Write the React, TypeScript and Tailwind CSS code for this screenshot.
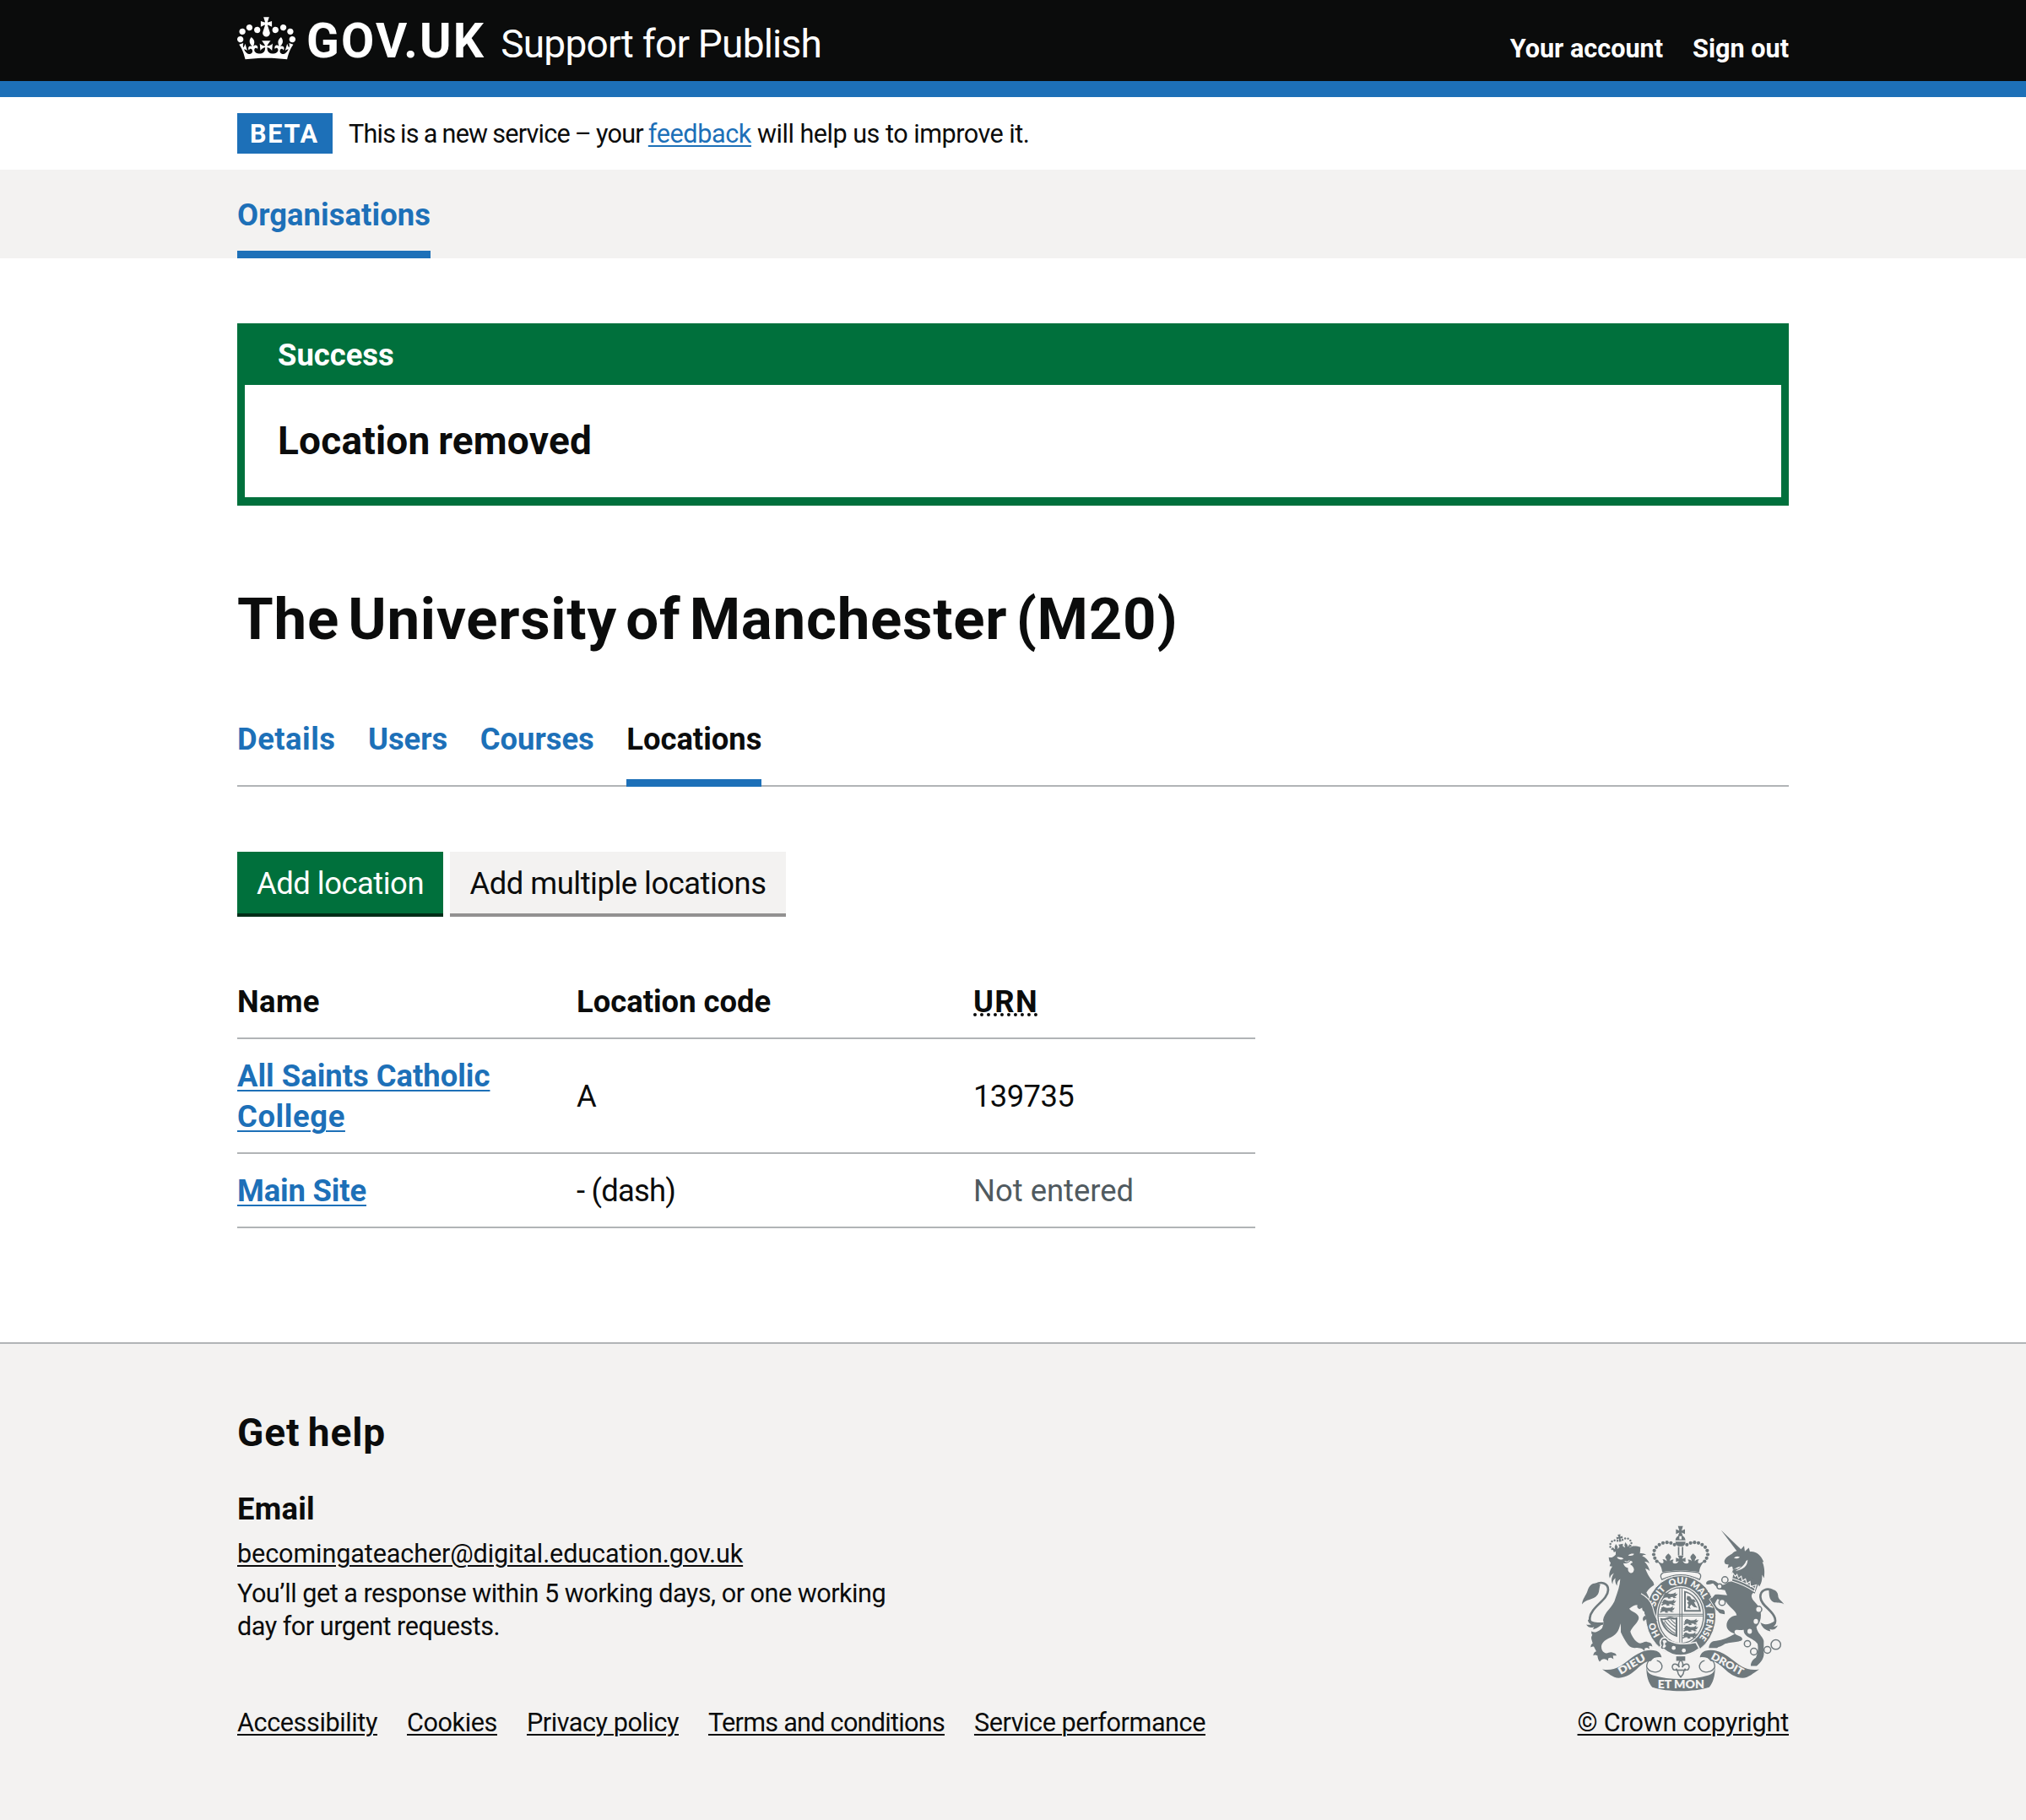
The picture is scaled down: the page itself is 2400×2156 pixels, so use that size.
import React from "react";

function Crown() {
  return (
    <svg viewBox="0 0 132 97" className="mt-[1px] h-[51px] w-[69px] self-start fill-white">
      <path d="M25 30.2c3.5 1.5 7.7-.2 9.1-3.7 1.5-3.6-.2-7.8-3.9-9.2-3.6-1.4-7.6.3-9.1 3.9-1.4 3.5.3 7.5 3.9 9zM9 39.5c3.6 1.5 7.8-.2 9.2-3.7 1.5-3.6-.2-7.8-3.9-9.1-3.6-1.5-7.6.2-9.1 3.8-1.4 3.5.3 7.5 3.8 9zM4.4 57.2c3.5 1.5 7.7-.2 9.1-3.8 1.5-3.6-.2-7.7-3.9-9.1-3.5-1.5-7.6.3-9.1 3.8-1.4 3.5.3 7.6 3.9 9.1zm38.3-21.4c3.5 1.5 7.7-.2 9.1-3.8 1.5-3.6-.2-7.7-3.9-9.1-3.6-1.5-7.6.3-9.1 3.8-1.3 3.6.4 7.7 3.9 9.1zm64.4-5.6c-3.6 1.5-7.8-.2-9.1-3.7-1.5-3.6.2-7.8 3.8-9.2 3.6-1.4 7.7.3 9.2 3.9 1.3 3.5-.4 7.5-3.9 9zm15.9 9.3c-3.6 1.5-7.7-.2-9.1-3.7-1.5-3.6.2-7.8 3.7-9.1 3.6-1.5 7.7.2 9.2 3.8 1.5 3.5-.3 7.5-3.8 9zm4.7 17.7c-3.6 1.5-7.8-.2-9.2-3.8-1.5-3.6.2-7.7 3.9-9.1 3.6-1.5 7.7.3 9.2 3.8 1.3 3.5-.4 7.6-3.9 9.1zM89.3 35.8c-3.6 1.5-7.8-.2-9.2-3.8-1.4-3.6.2-7.7 3.9-9.1 3.6-1.5 7.7.3 9.2 3.8 1.4 3.6-.3 7.7-3.9 9.1zM69.7 17.7l8.9 4.7V9.3l-8.9 2.8c-.2-.3-.5-.6-.9-.9L72.4 0H59.6l3.5 11.2c-.3.3-.6.5-.9.9l-8.8-2.8v13.1l8.8-4.7c.3.3.6.7.9.9l-5 15.4v.1c-.2.8-.4 1.6-.4 2.4 0 4.1 3.1 7.5 7 8.1h.2c.3 0 .7.1 1 .1.4 0 .7 0 1-.1h.2c4-.6 7.1-4.1 7.1-8.1 0-.8-.1-1.7-.4-2.4V34l-5.1-15.4c.4-.2.7-.6 1-.9zM66 92.8c16.9 0 32.8 1.1 47.1 3.2 4-16.9 8.9-26.7 14-33.5l-9.6-3.4c1 4.9 1.1 7.2 0 10.2-1.5-1.4-3-4.3-4.2-8.7L108.6 76c2.8-2 5-3.2 7.5-3.3-4.4 9.4-10 11.9-13.6 11.2-4.3-.8-6.3-4.6-5.6-7.9 1-4.7 5.7-5.9 8-.5 4.3-8.7-3-11.4-7.6-8.8 7.1-7.2 7.9-13.5 2.1-21.1-8 6.1-8.1 12.3-4.5 20.8-4.7-5.4-12.1-2.5-9.5 6.2 3.4-5.2 7.9-2 7.2 3.1-.6 4.3-6.4 7.8-13.5 7.2-10.3-.9-10.9-8-11.2-13.8 2.5-.5 7.1 1.8 11 7.3L80.2 60c-4.1 4.4-8 5.3-12.3 5.4 1.4-4.4 8-11.6 8-11.6H55.5s6.4 7.2 7.9 11.6c-4.2-.1-8-1-12.3-5.4l1.4 16.4c3.9-5.5 8.5-7.7 10.9-7.3-.3 5.8-.9 12.8-11.1 13.8-7.2.6-12.9-2.9-13.5-7.2-.7-5 3.8-8.3 7.1-3.1 2.7-8.7-4.6-11.6-9.4-6.2 3.7-8.5 3.6-14.7-4.6-20.8-5.8 7.6-5 13.9 2.2 21.1-4.7-2.6-11.9.1-7.7 8.8 2.3-5.5 7.1-4.2 8.1.5.7 3.3-1.3 7.1-5.7 7.9-3.5.7-9-1.8-13.5-11.2 2.5.1 4.7 1.3 7.5 3.3l-4.7-15.4c-1.2 4.4-2.7 7.2-4.3 8.7-1.1-3-.9-5.3 0-10.2l-9.5 3.4c5 6.9 9.9 16.7 14 33.5 14.8-2.1 30.8-3.2 47.7-3.2z" />
    </svg>
  );
}

const crownPearls: [number, number][] = [
  [401, 118], [388, 112], [374, 110], [360, 112], [347, 118], [336, 127], [329, 139], [327, 153], [331, 166], [338, 177],
];
const lionPearls: [number, number][] = [
  [-9, -33], [-19, -36], [-29, -34], [-36, -26], [-38, -16], [-33, -7],
];
const chainLinks: [number, number, number][] = [
  [580, 243, 11], [561, 266, 9], [570, 323, 11], [700, 348, 11], [660, 470, 11], [683, 498, 12], [731, 492, 12], [761, 473, 17],
];

function SmallLion({ x, y }: { x: number; y: number }) {
  return (
    <path
      transform={`translate(${x} ${y})`}
      d="M1 3l7-4 7 3 7 2 12-1 9-5-2 7 8-2-5 8-6 3 8 4-11 1-4-4-9 1 4 4-10 1-3-5-8 1-7 4-2-4 6-4-6-2 5-3z"
    />
  );
}

function RoyalArms() {
  return (
    <svg viewBox="72 50 720 590" className="h-[197px] w-[240px] fill-[#6f797d]" fontFamily="Lato, sans-serif" fontWeight="800">
      {/* Imperial crown */}
      <path d="M418 68l-5-16h18l-5 16 12-5v17l-12-5 5 13h-18l5-13-12 5V63z" />
      <path d="M404 103c1-11 7-16 14-17v13h8V86c7 1 13 6 14 17zM404 107h36c0 10-6 15-11 17h-14c-5-2-11-7-11-17z" />
      <path d="M413 126h5v30h-5zM427 126h5v30h-5z" />
      {crownPearls.map(([x, y]) => (
        <g key={`${x}-${y}`}>
          <circle cx={x} cy={y} r="6.3" />
          <circle cx={846 - x} cy={y} r="6.3" />
        </g>
      ))}
      <path d="M357 215c-1-17-9-28-18-39 9 3 13 8 19 8 6 0 4-10 0-13 8-2 12 2 15 6 1-8-4-9-5-14 2-7 7-10 11-14 4 4 9 8 10 14-1 5-5 7-5 14 4-5 8-7 14-5-5 5-5 13 4 13 8 0 12-5 14-9l-10 3v-15l12 5-5-12h20l-5 12 12-5v15l-10-3c2 4 6 9 14 9 9 0 9-8 4-13 6-2 10 0 14 5 0-7-4-9-5-14 1-6 6-10 10-14 4 4 9 7 11 14-1 5-6 6-5 14 3-4 7-8 15-6-4 3-6 13 0 13s10-5 19-8c-9 11-17 22-18 39-40-7-93-7-132 0z" />
      <path d="M362 217c40-7 82-7 122 0 10 4 14 12 6 25-45-22-90-22-134 0-8-12-4-21 6-25z" fill="#f3f2f1" stroke="#6f797d" strokeWidth="4" />

      {/* Crowned lion */}
      <g transform="translate(213 135) rotate(-10)">
        {lionPearls.map(([x, y]) => (
          <g key={`${x}-${y}`}>
            <circle cx={x} cy={y} r="3.7" />
            <circle cx={-x} cy={y} r="3.7" />
          </g>
        ))}
        <path d="M-3-45l-2-9H5l-2 9 8-2v9l-8-2 1 12h-8l1-12-8 2v-9z" />
        <path d="M-29 5l-3-20 9 10 0-8 6-10 5 11-2 8 8-6-2-9h16l-2 9 8 6-2-8 5-11 6 10 0 8 9-10-3 20C15 1-15 1-29 5z" />
      </g>
      <path d="M192 142c14-10 30-15 50-12 6-8 16-8 27-6l11 3-2 22c10-1 17 2 23 6-8-1-12 0-15 3 13 5 20 13 26 27-7-5-12-7-17-6 9 10 15 18 18 33-7-7-11-9-16-9 6 15 14 31 27 46 2 3 4 8 4 13-11 6-20 15-27 26 10 20 24 38 26 64 2 14 7 23 11 34-7-1-10 3-11 9-6-2-9-7-10-13-5 5-7 9-6 15-8-3-10-9-8-17-6 0-9 3-11 8-7-8-1-16 6-19-3-5-5-9-4-13-6-1-9-8-8-14l-10 5c-7-3-9-9-7-15-11 0-20 5-29 14 7 11 33 15 34 32 0 16-26 34-30 49 4 15 17 36 31 41 12 3 18-9 30-4 10 2 17 5 17 17-4-4-8-4-12-2l2 10c-6-6-12-6-17-2l-1 9c-5-8-12-11-22-11-11-1-23 4-36-11-11-14-19-31-26-45 0-14 1-20-2-31-3 27-17 43-41 53-15 8-25 16-26 29 0 10 3 17 11 22 9 6 17-4 27-1 7 2 13 2 16 11l-13 0 2 13c-7-7-14-7-19-2l0 8c-12-11-22-8-30 3-5-5-7-14-8-22-7-2-9-3-15 0 1-9 5-14 11-15l-9-17c-5 0-7 0-11 3 0-8 3-12 7-14-4-17-8-20-1-30-4-5-4-9-3-14 6 4 10 5 15 4 10-4 16-6 23-15 2-10 8-16 3-28 4-30 37-47 44-78 8-22 16-45 17-68-8 5-12 14-11 24-7-8-8-18-6-27-7 5-10 11-10 21-7-10-4-27 5-39-9 4-13 10-15 19-6-16 2-32 9-42l-10-2 4-12c-5-3-6-10-7-19 10 2 15 1 25-10z" />
      <path d="M196 163c7-2 17 0 24 5-7 5-19 4-24-5zM236 156c8-6 15-7 21-5-2 6-12 9-21 5zM219 184c8 2 16 0 24-7 3-3 8 0 9 5-6 1-8 4-8 7 8 4 12 10 13 18-2 9-6 12-11 12-7-1-12-9-10-18-6-1-14-5-17-17z" fill="#f3f2f1" />
      <path d="M224 177c6 3 11 2 17-3" fill="none" stroke="#f3f2f1" strokeWidth="3" />
      <path d="M148 398c-28 8-51 6-48-20 4-40 64-62 65-99 1-24-25-32-44-19" fill="none" stroke="#6f797d" strokeWidth="8" />
      <path d="M137 260c-20-12-38-2-45 21-6 19-18 28-20 49 13-19 40-14 54-32 9-12 6-24 11-38zM98 382c8 11 21 14 54 12-14 9-21 22-41 25l4-9c-11 5-20 3-28-8 7 2 13 1 18-1-8-4-11-8-12-15z" />

      {/* Garter and shield */}
      <ellipse cx="423" cy="370" rx="125" ry="142" stroke="#f3f2f1" strokeWidth="3" />
      <ellipse cx="423" cy="370" rx="87" ry="105" fill="#f3f2f1" />
      <ellipse cx="423" cy="370" rx="81" ry="99" fill="none" stroke="#6f797d" strokeWidth="4" />
      <path d="M418 272h3v194h-3zM426 272h3v194h-3zM343 364h160v3H343zM343 370h160v3H343z" />
      <SmallLion x={363} y={289} />
      <SmallLion x={358} y={314} />
      <SmallLion x={353} y={339} />
      <SmallLion x={437} y={383} />
      <SmallLion x={436} y={407} />
      <SmallLion x={433} y={431} />
      <path d="M350 379c18 5 24-5 36-5 9 1 15 5 25 2v70c-32-8-57-36-61-67zm8 7c8 26 25 44 46 51l1-53c-7 1-13-2-19-3-8 1-16 7-28 5z" fillRule="evenodd" />
      <path d="M366 387c8 12 18 22 38 36M376 384c8 10 16 18 28 26M386 381c6 8 10 12 18 18M362 392c8 18 24 32 42 42" fill="none" stroke="#6f797d" strokeWidth="3.5" />
      <path d="M435 282c30 5 55 33 60 74h-60zm6 7v61h47c-5-33-22-54-47-61z" fillRule="evenodd" />
      <path d="M446 300l10 2 6 10 9 1 6 9-7 0 6 12 7 8-13-2-10-9-5 8 4 7-12-3 4-11-5-9 6-3-8-8z" />
      <path id="garter-path" d="M423 483C374 483 329 432 329 370S374 257 423 257 517 308 517 370 472 483 423 483" fill="none" />
      <g fill="#f3f2f1" fontSize="32" textAnchor="middle">
        <text><textPath href="#garter-path" startOffset="17.5%">HO</textPath></text>
        <text><textPath href="#garter-path" startOffset="35.5%">SOIT</textPath></text>
        <text><textPath href="#garter-path" startOffset="48.5%">QUI</textPath></text>
        <text><textPath href="#garter-path" startOffset="60.5%">MAL</textPath></text>
        <text><textPath href="#garter-path" startOffset="70%">Y</textPath></text>
        <text><textPath href="#garter-path" startOffset="81%" textLength="96" lengthAdjust="spacingAndGlyphs">PENSE</textPath></text>
      </g>
      <path d="M356 452c8-6 19-3 23 6 30 14 62 16 98 7l12 22c-22 17-40 24-66 25-24 0-44-8-60-22-12 3-16-8-10-14-5-8-4-16 3-24z" stroke="#f3f2f1" strokeWidth="5" />
      <path d="M358 460c8-6 14-2 16 5-8 0-9 8-3 12-3 9-11 10-13 5 5-7 5-14 0-22z" fill="#f3f2f1" />
      <circle cx="398" cy="485" r="7" fill="#f3f2f1" />
      <circle cx="434" cy="494" r="7" fill="#f3f2f1" />
      {/* Lion's forepaw resting on the garter */}
      <path d="M276 288c24 8 44 34 46 54 3 18 10 32 18 46-9-1-13 3-12 11-6-3-9-8-10-15-6 4-8 9-6 16-9-3-11-10-9-17-6 0-9 3-11 8-7-8-1-16 6-19z" />
      <path d="M282 292c18 10 34 24 41 47 3 18 9 32 17 47" fill="none" stroke="#f3f2f1" strokeWidth="3.5" />

      {/* Unicorn */}
      <path d="M566 66l71 68 11-12 3 20 14-13 4 14c24-2 39 13 49 37l-5-1c8 19 9 35 6 58l-7-12c1 20-3 32-10 42l-7-14-90-33c2-15 8-17 21-16l12-9c-15 2-24 10-30 12 0-5 0-9-4-12l-14 6 3-13c-10 1-15-2-15-12 4-12 15-18 27-25 5-7 9-9 17-11z" />
      <path d="M612 166c5-6 12-8 21-4-4 5-12 7-21 4zM661 172c-1 22-14 34-44 40 20-12 32-20 38-36z" fill="#f3f2f1" />
      <path d="M612 216l-12 36 86 40 18-48z" />
      <path d="M602 250c28 6 55 21 82 36-9 7-11 13-8 21 4 14 24 23 30 45 4 18 3 40-14 58 2 22 22 32 26 50v38c3 18-6 36-25 51h-21c0-13 7-23 18-29 6-16 10-30 6-50-16-21-51-23-49-49-17 2-33-6-33 8 2 14 28 12 28 25-2 13-50 9-66 19-9 7-17 6-24 12H523c1-15 10-25 26-25 22-2 44-13 66-25-12-5-29-12-29-30 0-18 14-34 36-36-3-17-23-25-38-48-12 0-20-8-31-10l-9 17c6 14 14 20 24 21 9-1 13 7 11 16-12-2-20-3-24-12-14-6-24-20-30-34l19-23c16-3 29 1 44 2l-8-18-22-4-20-20c-7 0-16 8-25 1 1-11 12-13 22-12 14-1 22 18 37 16 12 0 17-12 25-11z" />
      <path d="M600 246c31 9 60 22 87 40M604 237c31 9 58 21 85 38M604 247l4-28 9 12 6-7 5 14 10-8 4 17 11-7 5 17 11-8 2 18 20-6-7 25" fill="none" stroke="#f3f2f1" strokeWidth="3.5" />
      <path d="M519 284l28 6-22 22 26 42" fill="none" stroke="#f3f2f1" strokeWidth="3" />
      {chainLinks.map(([x, y, r]) => (
        <circle key={`${x}-${y}`} cx={x} cy={y} r={r} fill="#f3f2f1" stroke="#6f797d" strokeWidth="4.5" />
      ))}
      <ellipse cx="690" cy="391" rx="8" ry="9" fill="#f3f2f1" />
      <ellipse cx="668" cy="426" rx="8" ry="9" fill="#f3f2f1" />
      <path d="M712 402c30 20 52 2 46-22-8-30-50-44-52-76-1-24 24-34 44-23" fill="none" stroke="#6f797d" strokeWidth="8" />
      <path d="M736 280c17-8 32 3 33 19 0 14 12 15 21 31-13-8-25-3-38-8-16-9-14-25-16-42zM706 394c10 9 26 13 54-6-1 11-8 18-14 20 8 2 15 0 22-3-8 16-20 17-29 13l3 8c-18-3-30-12-36-32z" />

      {/* Motto ribbon */}
      <path d="M144 561c44 8 70-14 98-36 30-23 62-40 95-29 12 5 16 13 18 22-14-5-28-1-38 14-40 0-58 57-114 60-22-1-38-18-59-31z" />
      <path d="M702 561c-44 8-70-14-98-36-30-23-62-40-95-29-12 5-16 13-18 22 14-5 28-1 38 14 40 0 58 57 114 60 22-1 38-18 59-31z" />
      <path d="M354 516c-36-2-52 16-52 36 6 20 44 28 54 4 3-12-6-24-18-26M492 516c36-2 52 16 52 36-6 20-44 28-54 4-3-12 6-24 18-26" fill="none" stroke="#6f797d" strokeWidth="4" />
      <path d="M301 550c2 20 8 27 23 32 60 18 138 18 198 0 15-5 21-12 23-32 1 30-6 58-21 75-55 18-147 18-202 0-15-17-22-45-21-75z" />
      <path d="M407 515h32v16h-32z" />
      <path d="M423 528c8 8 10 16 5 26 8-16 26-16 25 0-2 10-10 12-15 6-6 6-4 16-8 20l-7 9-7-9c-4-4-2-14-8-20-5 6-13 4-15-6-1-16 17-16 25 0-5-10-3-18 5-26z" fill="#f3f2f1" stroke="#6f797d" strokeWidth="4.5" />
      <path d="M405 564h36" stroke="#6f797d" strokeWidth="5" />
      <g fill="#f3f2f1" fontSize="36" textAnchor="middle">
        <text transform="translate(255 554) rotate(-30)" textLength="106" lengthAdjust="spacingAndGlyphs">DIEU</text>
        <text x="424" y="627" fontSize="38" textLength="166" lengthAdjust="spacingAndGlyphs">ET MON</text>
        <text transform="translate(583 553) rotate(29)" textLength="126" lengthAdjust="spacingAndGlyphs">DROIT</text>
      </g>
    </svg>
  );
}

const tabs = [
  { label: "Details", className: "tracking-[0.5px] text-[#1d70b8]" },
  { label: "Users", className: "text-[#1d70b8]" },
  { label: "Courses", className: "text-[#1d70b8]" },
  { label: "Locations", className: "border-b-[9px] border-[#1d70b8]" },
];

const footerLinks = [
  { label: "Accessibility", className: "tracking-[-0.4px]" },
  { label: "Cookies", className: "tracking-[-0.4px]" },
  { label: "Privacy policy", className: "tracking-[-0.46px]" },
  { label: "Terms and conditions", className: "tracking-[-0.73px]" },
  { label: "Service performance", className: "tracking-[-0.43px]" },
];

const tableLink = "font-bold text-[#1d70b8] underline decoration-2 underline-offset-[4px]";
const cell = "border-b-2 border-[#b1b4b6] p-0 pt-[2px] text-left align-middle";

export default function App() {
  return (
    <div className="flex min-h-[2156px] w-full flex-col bg-white font-[Roboto,sans-serif] text-[36.4px] leading-[48px] text-[#0b0c0c]">
      <header className="h-[115px] border-b-[19px] border-[#1d70b8] bg-[#0b0c0c] text-white">
        <div className="mx-auto flex w-[1838px] items-baseline pt-[19px]">
          <Crown />
          <span className="ml-[13px] text-[57px] leading-[60px] font-bold tracking-[2.2px]">GOV.UK</span>
          <span className="ml-[18px] text-[46px] leading-[60px] tracking-[-0.78px]">Support for Publish</span>
          <nav className="ml-auto flex gap-[35px] text-[30.6px] leading-[38px] font-bold">
            <a>Your account</a>
            <a>Sign out</a>
          </nav>
        </div>
      </header>

      <div className="mx-auto flex h-[86px] w-[1838px] items-baseline pt-[19px] text-[30.6px]">
        <strong className="h-12 w-[113px] bg-[#1d70b8] pt-[1px] pl-[15px] leading-[48px] font-bold tracking-[1.7px] text-white">BETA</strong>
        <p className="ml-[19px] tracking-[-0.8px] [word-spacing:-0.8px]">
          This is a new service – your{" "}
          <a className="tracking-[-0.4px] text-[#1d70b8] underline decoration-2 underline-offset-[3px]">feedback</a>
          <span className="tracking-[-0.5px] [word-spacing:0px]"> will help us to improve it.</span>
        </p>
      </div>

      <nav className="bg-[#f3f2f1]">
        <div className="mx-auto flex w-[1838px]">
          <a className="h-[105px] border-b-[9px] border-[#1d70b8] pt-[30px] font-bold tracking-[0.07px] text-[#1d70b8]">Organisations</a>
        </div>
      </nav>

      <main className="mx-auto w-[1838px] pt-[77px]">
        <section className="border-x-[9px] border-b-[10px] border-[#00703c]">
          <h2 className="h-[73px] bg-[#00703c] pt-[14px] pl-[39px] font-bold text-white">Success</h2>
          <p className="h-[133px] pt-[38px] pl-[39px] text-[46px] leading-[57px] font-bold tracking-[0.2px] [word-spacing:-2px]">Location removed</p>
        </section>

        <h1 className="mt-[97px] text-[69px] leading-[76px] font-bold tracking-[0.75px] [word-spacing:-7.6px]">The University of Manchester (M20)</h1>

        <nav className="mt-[59px] flex h-[101px] gap-[38.4px] border-b-2 border-[#b1b4b6] font-bold">
          {tabs.map((tab) => (
            <a key={tab.label} className={`h-[101px] pt-[21px] ${tab.className}`}>{tab.label}</a>
          ))}
        </nav>

        <div className="mt-[77px] flex gap-2">
          <button className="h-[77px] w-[244px] border-b-4 border-[#002d18] bg-[#00703c] pt-[2px] tracking-[-0.49px] text-white">Add location</button>
          <button className="h-[77px] w-[398px] border-b-4 border-[#929191] bg-[#f3f2f1] pt-[2px] tracking-[-0.49px]">Add multiple locations</button>
        </div>

        <table className="mt-[57px] w-[1206px] table-fixed border-separate border-spacing-0">
          <thead>
            <tr className="h-[88px]">
              <th className={`w-[402px] font-bold tracking-[0.4px] ${cell}`}>Name</th>
              <th className={`w-[470px] font-bold ${cell}`}>Location code</th>
              <th className={`font-bold tracking-[1.3px] ${cell}`}>
                <abbr className="underline decoration-dotted decoration-[3.6px] underline-offset-[1px] [text-decoration-skip-ink:none]">URN</abbr>
              </th>
            </tr>
          </thead>
          <tbody>
            <tr className="h-[136px]">
              <td className={cell}>
                <a className={tableLink}>
                  All Saints Catholic
                  <br />
                  <span className="tracking-[0.6px]">College</span>
                </a>
              </td>
              <td className={cell}>A</td>
              <td className={`tracking-[-0.6px] ${cell}`}>139735</td>
            </tr>
            <tr className="h-[88px]">
              <td className={`tracking-[-0.16px] ${cell}`}>
                <a className={tableLink}>Main Site</a>
              </td>
              <td className={`tracking-[-0.79px] ${cell}`}>- (dash)</td>
              <td className={`text-[#505a5f] ${cell}`}>Not entered</td>
            </tr>
          </tbody>
        </table>
      </main>

      <footer className="mt-[135px] grow border-t-2 border-[#b1b4b6] bg-[#f3f2f1]">
        <div className="mx-auto flex w-[1838px] items-end justify-between pt-[77px] text-[30.6px] leading-[38.3px]">
          <div>
            <h2 className="text-[46px] leading-[57px] font-bold tracking-[0.9px] [word-spacing:-3px]">Get help</h2>
            <h3 className="mt-[38px] text-[36.4px] leading-[48px] font-bold tracking-[0.25px]">Email</h3>
            <p className="mt-[10px] tracking-[-0.12px]">
              <a className="underline decoration-2 underline-offset-[3px]">becomingateacher@digital.education.gov.uk</a>
            </p>
            <p className="mt-[9px] tracking-[-0.5px]">
              You’ll get a response within 5 working days, or one working
              <br />
              day for urgent requests.
            </p>
            <ul className="mt-[76px] flex gap-[35px]">
              {footerLinks.map((link) => (
                <li key={link.label} className={`underline decoration-2 underline-offset-[3px] ${link.className}`}>{link.label}</li>
              ))}
            </ul>
          </div>
          <div className="flex flex-col items-center gap-[18px]">
            <RoyalArms />
            <a className="tracking-[-0.17px] underline decoration-2 underline-offset-[3px]">© Crown copyright</a>
          </div>
        </div>
      </footer>
    </div>
  );
}
